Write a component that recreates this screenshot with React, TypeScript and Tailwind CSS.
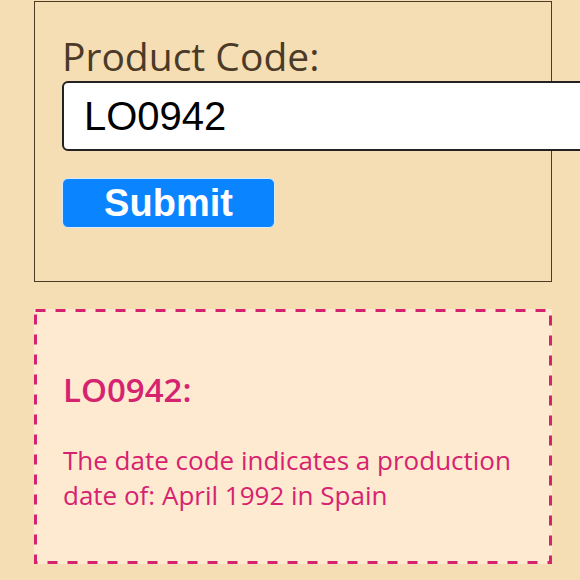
export default function App() {
  return (
    <div className="min-h-[580px] bg-[#f5deb3] pl-[34px] pt-px overflow-hidden font-['Open_Sans',sans-serif]">
      <form
        className="w-[518px] h-[281px] border border-[#4b3a28] px-[27px] pt-[31px]"
        onSubmit={(e) => e.preventDefault()}
      >
        <label className="block text-[39px] leading-[46px] text-[#4b3a28]">
          Product Code:
        </label>
        <input
          defaultValue="LO0942"
          className="mt-[2px] block w-[560px] h-[70px] bg-white border-2 border-[#222] rounded-[6px] pl-[20px] text-[40px] text-black font-['Liberation_Sans',Arial,sans-serif] outline-none"
        />
        <button
          type="submit"
          className="mt-[27px] block w-[213px] h-[50px] bg-[#0a84ff] border border-[#d8ebff] rounded-[6px] text-white font-bold text-[38px] leading-[44px] font-['Liberation_Sans',Arial,sans-serif]"
        >
          Submit
        </button>
      </form>

      <div className="relative mt-[27px] w-[518px] h-[255px] bg-[#fdead1] px-[29px] pt-[62px]">
        <svg
          className="absolute inset-0 pointer-events-none"
          width="518"
          height="255"
          viewBox="0 0 518 255"
        >
          <rect
            x="1.5"
            y="1.5"
            width="515"
            height="252"
            fill="none"
            stroke="#d6236f"
            strokeWidth="3"
            strokeDasharray="10 10"
          />
        </svg>
        <h2 className="text-[33px] leading-[37px] font-semibold text-[#d6236f]">
          LO0942:
        </h2>
        <p className="mt-[35px] text-[26px] leading-[35px] text-[#d6236f]">
          The date code indicates a production date of: April 1992 in Spain
        </p>
      </div>
    </div>
  );
}
